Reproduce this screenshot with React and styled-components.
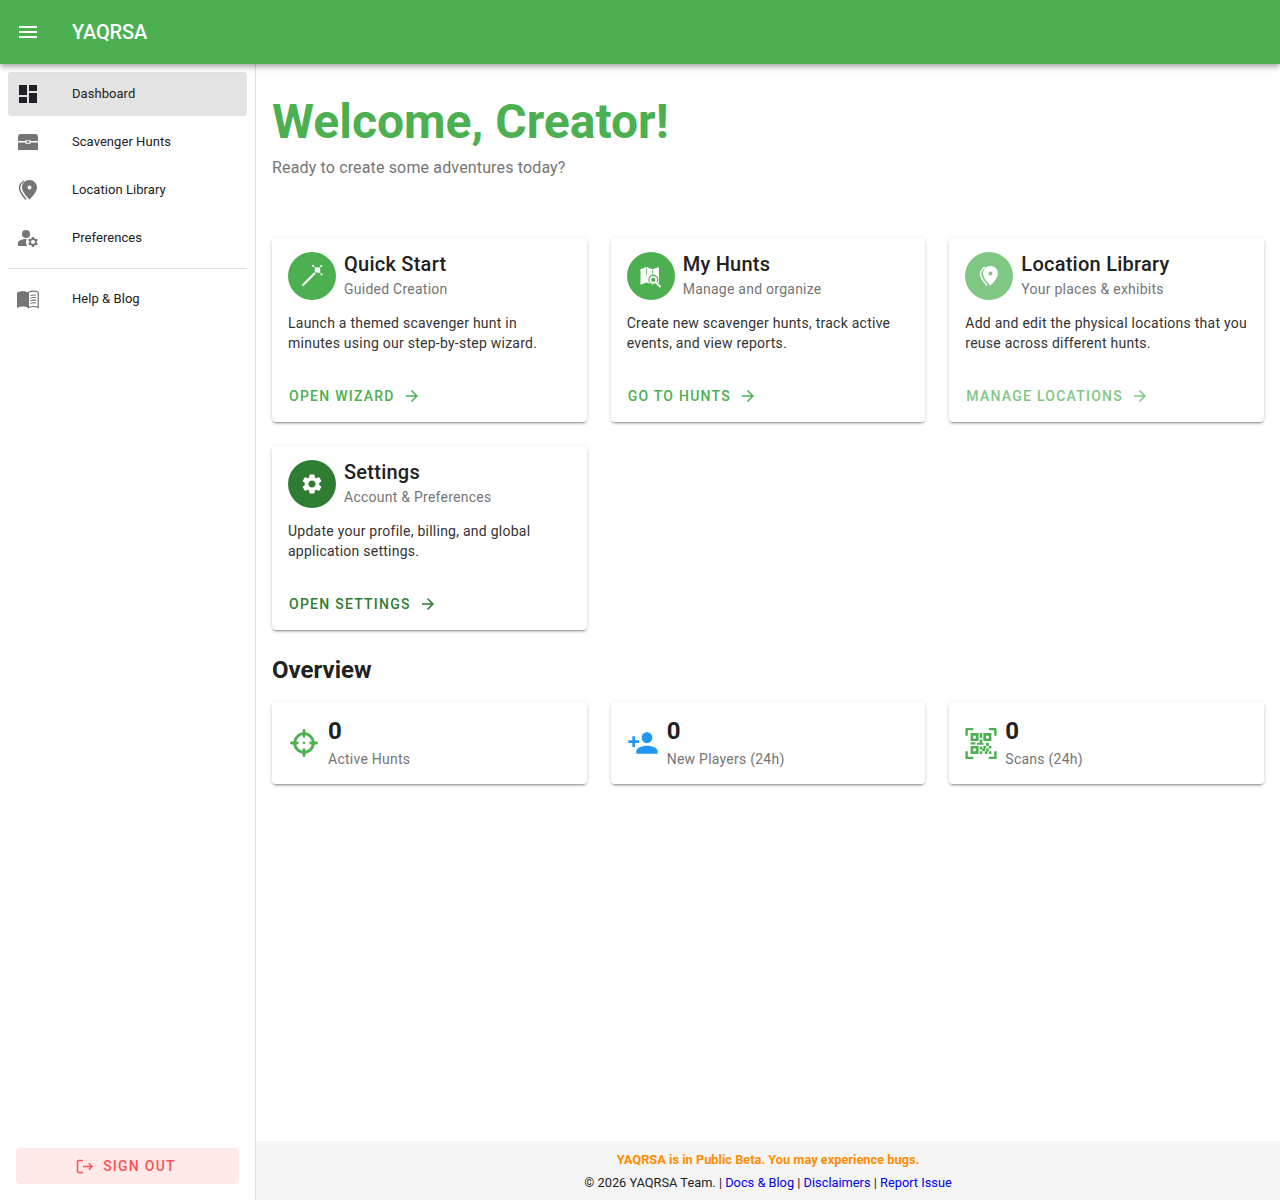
import React from 'react';
import styled, { createGlobalStyle } from 'styled-components';
import {
  MdMenu,
  MdDashboard,
  MdManageAccounts,
  MdArrowForward,
  MdSettings,
  MdPersonAdd,
} from 'react-icons/md';

const GlobalStyle = createGlobalStyle`
* {
  box-sizing: border-box;
}

body {
  margin: 0;
  background: #fff;
  color: #212121;
  font-family: Roboto, "Liberation Sans", sans-serif;
}

p, h1, h2, h3 {
  margin: 0;
}
`

const Page = styled.div`
display: flex;
flex-direction: column;
height: 1200px;
overflow: hidden;
`

const Header = styled.header`
position: relative;
z-index: 2;
flex: none;
height: 64px;
display: flex;
align-items: center;
padding: 0 16px;
background: #4caf50;
color: #fff;
box-shadow: 0 2px 4px -1px rgba(0,0,0,.2), 0 4px 5px 0 rgba(0,0,0,.14), 0 1px 10px 0 rgba(0,0,0,.12);
`

const Logo = styled.h1`
margin-left: 32px;
font-size: 20px;
font-weight: 500;
line-height: 32px;
letter-spacing: -0.15px;
`

const Body = styled.div`
flex: 1;
min-height: 0;
display: flex;
`

const Sidebar = styled.aside`
flex: none;
width: 256px;
display: flex;
flex-direction: column;
border-right: 1px solid #e0e0e0;
`

const Nav = styled.nav`
flex: 1;
display: flex;
flex-direction: column;
gap: 4px;
padding: 8px 8px 0;
`

const NavItem = styled.a`
height: 44px;
display: flex;
align-items: center;
padding: 0 8px;
border-radius: 4px;
background: ${p => (p.$active ? '#e3e3e3' : 'transparent')};
color: ${p => (p.$active ? '#1f1f26' : '#757575')};
`

const NavIcon = styled.span`
flex: none;
width: 56px;
display: flex;
`

const NavLabel = styled.span`
padding-bottom: 2px;
font-size: 13px;
font-weight: 400;
letter-spacing: 0.05px;
color: #212121;
`

const Divider = styled.hr`
width: 100%;
margin: 4px 0;
border: none;
border-top: 1px solid #e0e0e0;
`

const SignOutBox = styled.div`
padding: 16px;
`

const SignOut = styled.button`
width: 100%;
height: 36px;
display: flex;
align-items: center;
justify-content: center;
gap: 9px;
padding: 0 3px 0 0;
border: none;
border-radius: 4px;
background: #ffe9e9;
color: #ff5252;
font-family: inherit;
font-size: 14px;
font-weight: 500;
letter-spacing: 1.25px;
`

const Column = styled.div`
flex: 1;
min-width: 0;
display: flex;
flex-direction: column;
`

const Main = styled.main`
flex: 1;
padding: 29px 16px 0;
`

const Welcome = styled.h2`
font-size: 48px;
font-weight: 700;
line-height: 58px;
color: #4caf50;
`

const Intro = styled.p`
margin-top: 5px;
font-size: 16px;
line-height: 24px;
letter-spacing: 0.15px;
color: #757575;
`

const CardGrid = styled.div`
display: grid;
grid-template-columns: repeat(3, 1fr);
gap: 24px;
margin-top: 58px;
`

const Card = styled.section`
height: 184px;
display: flex;
flex-direction: column;
padding: 14px 16px 16px;
border-radius: 4px;
background: #fff;
box-shadow: 0 3px 1px -2px rgba(0,0,0,.2), 0 2px 2px 0 rgba(0,0,0,.14), 0 1px 5px 0 rgba(0,0,0,.12);
`

const CardHead = styled.div`
display: flex;
align-items: flex-start;
gap: 8px;
`

const Avatar = styled.div`
flex: none;
width: 48px;
height: 48px;
display: flex;
align-items: center;
justify-content: center;
border-radius: 50%;
background: ${p => p.$color};
color: #fff;
`

const CardTitle = styled.h3`
font-size: 20px;
font-weight: 500;
line-height: 24px;
letter-spacing: 0.25px;
`

const CardSub = styled.p`
margin-top: 3px;
font-size: 14px;
line-height: 20px;
letter-spacing: 0.25px;
color: #757575;
`

const CardText = styled.p`
flex: 1;
margin-top: 13px;
font-size: 14px;
line-height: 20px;
letter-spacing: 0.25px;
color: #333;
`

const CardLink = styled.a`
display: flex;
align-items: center;
gap: 8px;
height: 20px;
margin: 0 0 0 1px;
font-size: 14px;
font-weight: 500;
letter-spacing: 1.25px;
color: ${p => p.$color};
`

const SectionTitle = styled.h2`
margin-top: 24px;
font-size: 24px;
font-weight: 700;
line-height: 32px;
`

const StatGrid = styled(CardGrid)`
margin-top: 16px;
`

const StatCard = styled.section`
height: 82px;
display: flex;
align-items: center;
gap: 8px;
padding: 0 16px;
border-radius: 4px;
background: #fff;
box-shadow: 0 3px 1px -2px rgba(0,0,0,.2), 0 2px 2px 0 rgba(0,0,0,.14), 0 1px 5px 0 rgba(0,0,0,.12);
`

const StatIcon = styled.span`
flex: none;
width: 32px;
display: flex;
color: ${p => p.$color};
`

const StatValue = styled.p`
font-size: 24px;
font-weight: 700;
line-height: 30px;
`

const StatLabel = styled.p`
margin-top: 2px;
font-size: 14px;
line-height: 22px;
letter-spacing: 0.25px;
color: #757575;
`

const Footer = styled.footer`
flex: none;
height: 59px;
padding-top: 9px;
background: #f5f5f5;
text-align: center;
font-size: 12.8px;
line-height: 20px;
`

const Beta = styled.p`
font-weight: 700;
color: #ff8c00;
`

const Legal = styled.p`
margin-top: 3px;
color: #212121;
`

const FooterLink = styled.a`
color: #0000ee;
`

const ChestIcon = () => (
  <svg width="24" height="24" viewBox="0 0 24 24" fill="currentColor">
    <path d="M5 4h14a3 3 0 0 1 3 3v4h-7.5v-.8h-5v.8H2V7a3 3 0 0 1 3-3z" />
    <path d="M2 12.5h7.5v1.3h5v-1.3H22V20H2z" />
    <rect x="10.6" y="11.1" width="2.8" height="1.7" rx=".6" />
  </svg>
);

const PinsIcon = () => (
  <svg width="24" height="24" viewBox="0 0 24 24" fill="currentColor">
    <path fillRule="evenodd" d="M13.5 2C9.4 2 6 5.3 6 9.5c0 5 7.5 12 7.5 12S21 14.5 21 9.5C21 5.3 17.6 2 13.5 2zm0 9.5a2 2 0 1 1 0-4 2 2 0 0 1 0 4z" />
    <path fill="none" stroke="currentColor" strokeWidth="1.5" d="M8 3C5 5 3.5 7.5 3.5 10c0 3.8 4 8.5 6.5 11.5" />
  </svg>
);

const BookIcon = () => (
  <svg width="24" height="24" viewBox="0 0 24 24" fill="currentColor">
    <path d="M1 5.8C3 4.6 5 4.2 7 4.2c1.9 0 3.6.4 5 1.3v15.3c-1.5-.8-3.2-1.2-5-1.2-2 0-4 .4-6 1.3z" />
    <path fill="none" stroke="currentColor" strokeWidth="1.2" d="M12.4 5.6c1.4-.9 3-1.4 4.8-1.4 1.7 0 3.4.3 5 1.1v15.2c-1.6-.7-3.3-1-5-1-1.8 0-3.4.4-4.8 1.2z" />
    <path fill="none" stroke="currentColor" strokeWidth="1.1" d="M14.5 8.6c1.7-.7 3.7-.8 5.5-.4M14.5 11.2c1.7-.7 3.7-.8 5.5-.4M14.5 13.8c1.7-.7 3.7-.8 5.5-.4M14.5 16.4c1.7-.7 3.7-.8 5.5-.4" />
  </svg>
);

const WandIcon = () => (
  <svg width="24" height="24" viewBox="0 0 24 24" fill="currentColor">
    <path fill="none" stroke="currentColor" strokeWidth="2.2" strokeLinecap="round" d="M3 21 14.5 9.5" />
    <circle cx="17.5" cy="6" r="2.8" />
    <circle cx="13" cy="1.8" r="1.1" />
    <circle cx="21.2" cy="2" r="1" />
    <circle cx="21.6" cy="10.4" r="1" />
    <path fill="none" stroke="currentColor" strokeWidth="1" d="M14 2.8 17 5.5M20.5 2.8 18.5 5M20.8 9.6 18.5 7.2" />
  </svg>
);

const MapSearchIcon = ({ bg }) => (
  <svg width="24" height="24" viewBox="0 0 24 24" fill="currentColor">
    <path d="M1.5 5.2 7.500 3l6 2.200L20 3v15.500l-6.500 2.200-6-2.200-6 2.200z" />
    <path stroke={bg} strokeWidth=".7" d="M7.500 4v7M13.500 6v5" />
    <circle cx="14.300" cy="15.800" r="5" fill={bg} />
    <circle cx="14.300" cy="15.800" r="3" fill="none" stroke="currentColor" strokeWidth="1.800" />
    <path stroke="currentColor" strokeWidth="2" strokeLinecap="round" d="m17 18.500 4 4" />
  </svg>
);

const LogoutIcon = () => (
  <svg width="18" height="18" viewBox="0 0 18 18" fill="none" stroke="currentColor" strokeWidth="1.5">
    <path d="M7 3.500H2.500a1 1 0 0 0-1 1v10a1 1 0 0 0 1 1H7" />
    <path d="M7 9.500h9M12.800 6.200l3.300 3.300-3.300 3.300" />
  </svg>
);

const TargetIcon = () => (
  <svg width="32" height="32" viewBox="0 0 24 24" fill="none" stroke="currentColor" strokeWidth="2.100" strokeLinecap="round">
    <circle cx="12" cy="12" r="7" />
    <path d="M12 2.600V7M12 17v4.400M2.600 12H7M17 12h4.400" />
    <circle cx="12" cy="12" r=".5" fill="currentColor" strokeWidth="1" />
  </svg>
);

const QrIcon = () => (
  <svg width="33" height="33" viewBox="2 2 20 20" fill="currentColor">
    <path fill="none" stroke="currentColor" strokeWidth="1.500" strokeLinecap="round" strokeLinejoin="round" d="M3 6.500V3h3.500M17.500 3H21v3.500M21 17.500V21h-3.500M6.500 21H3v-3.500" />
    <path fillRule="evenodd" d="M5.500 5.500h5v5h-5zm1.600 1.600v1.800h1.800V7.100z" />
    <path fillRule="evenodd" d="M13.500 5.500h5v5h-5zm1.600 1.600v1.800h1.800V7.100z" />
    <path fillRule="evenodd" d="M5.500 13.500h5v5h-5zm1.600 1.600v1.800h1.800v-1.800z" />
    <path d="M11.200 5.500h1.600v3h-1.600zM11.200 9.500h1.600v2.300h-1.600zM5.500 11.200h3v1.400h-3zM9.500 11.500h4v1.300h-4zM13.500 13.500h1.700v1.700h-1.700zM15.200 11.500h1.700v2h-1.700zM16.900 13.500h1.600v1.700h-1.600zM11.200 13.800h1.600v2h-1.600zM12.800 15.200h1.700v1.700h-1.700zM15.200 15.200h1.700v1.700h-1.700zM11.200 16.900h1.600v1.600h-1.600zM14.500 16.900h1.500v1.600h-1.500zM16.900 16.900h1.600v1.600h-1.600z" />
  </svg>
);

const cards = [
  {
    title: 'Quick Start',
    sub: 'Guided Creation',
    text: 'Launch a themed scavenger hunt in minutes using our step-by-step wizard.',
    link: 'OPEN WIZARD',
    color: '#4caf50',
    icon: <WandIcon />,
  },
  {
    title: 'My Hunts',
    sub: 'Manage and organize',
    text: 'Create new scavenger hunts, track active events, and view reports.',
    link: 'GO TO HUNTS',
    color: '#4caf50',
    icon: <MapSearchIcon bg="#4caf50" />,
  },
  {
    title: 'Location Library',
    sub: 'Your places & exhibits',
    text: 'Add and edit the physical locations that you reuse across different hunts.',
    link: 'MANAGE LOCATIONS',
    color: '#81c784',
    icon: <PinsIcon />,
  },
  {
    title: 'Settings',
    sub: 'Account & Preferences',
    text: 'Update your profile, billing, and global application settings.',
    link: 'OPEN SETTINGS',
    color: '#2e7d32',
    icon: <MdSettings size={24} />,
  },
];

const stats = [
  { label: 'Active Hunts', color: '#4caf50', icon: <TargetIcon /> },
  { label: 'New Players (24h)', color: '#2196f3', icon: <MdPersonAdd size={32} /> },
  { label: 'Scans (24h)', color: '#4caf50', icon: <QrIcon /> },
];

function App() {
  return (
    <Page>
      <GlobalStyle />
      <Header>
        <MdMenu size={24} />
        <Logo>YAQRSA</Logo>
      </Header>
      <Body>
        <Sidebar>
          <Nav>
            <NavItem $active>
              <NavIcon><MdDashboard size={24} /></NavIcon>
              <NavLabel>Dashboard</NavLabel>
            </NavItem>
            <NavItem>
              <NavIcon><ChestIcon /></NavIcon>
              <NavLabel>Scavenger Hunts</NavLabel>
            </NavItem>
            <NavItem>
              <NavIcon><PinsIcon /></NavIcon>
              <NavLabel>Location Library</NavLabel>
            </NavItem>
            <NavItem>
              <NavIcon><MdManageAccounts size={24} /></NavIcon>
              <NavLabel>Preferences</NavLabel>
            </NavItem>
            <Divider />
            <NavItem>
              <NavIcon><BookIcon /></NavIcon>
              <NavLabel>Help &amp; Blog</NavLabel>
            </NavItem>
          </Nav>
          <SignOutBox>
            <SignOut><LogoutIcon />SIGN OUT</SignOut>
          </SignOutBox>
        </Sidebar>
        <Column>
          <Main>
            <Welcome>Welcome, Creator!</Welcome>
            <Intro>Ready to create some adventures today?</Intro>
            <CardGrid>
              {cards.map(card => (
                <Card key={card.title}>
                  <CardHead>
                    <Avatar $color={card.color}>{card.icon}</Avatar>
                    <div>
                      <CardTitle>{card.title}</CardTitle>
                      <CardSub>{card.sub}</CardSub>
                    </div>
                  </CardHead>
                  <CardText>{card.text}</CardText>
                  <CardLink $color={card.color}>
                    {card.link}
                    <MdArrowForward size={18} />
                  </CardLink>
                </Card>
              ))}
            </CardGrid>
            <SectionTitle>Overview</SectionTitle>
            <StatGrid>
              {stats.map(stat => (
                <StatCard key={stat.label}>
                  <StatIcon $color={stat.color}>{stat.icon}</StatIcon>
                  <div>
                    <StatValue>0</StatValue>
                    <StatLabel>{stat.label}</StatLabel>
                  </div>
                </StatCard>
              ))}
            </StatGrid>
          </Main>
          <Footer>
            <Beta>YAQRSA is in Public Beta. You may experience bugs.</Beta>
            <Legal>
              © 2026 YAQRSA Team. | <FooterLink>Docs &amp; Blog</FooterLink> | <FooterLink>Disclaimers</FooterLink> | <FooterLink>Report Issue</FooterLink>
            </Legal>
          </Footer>
        </Column>
      </Body>
    </Page>
  );
}

export default App;
